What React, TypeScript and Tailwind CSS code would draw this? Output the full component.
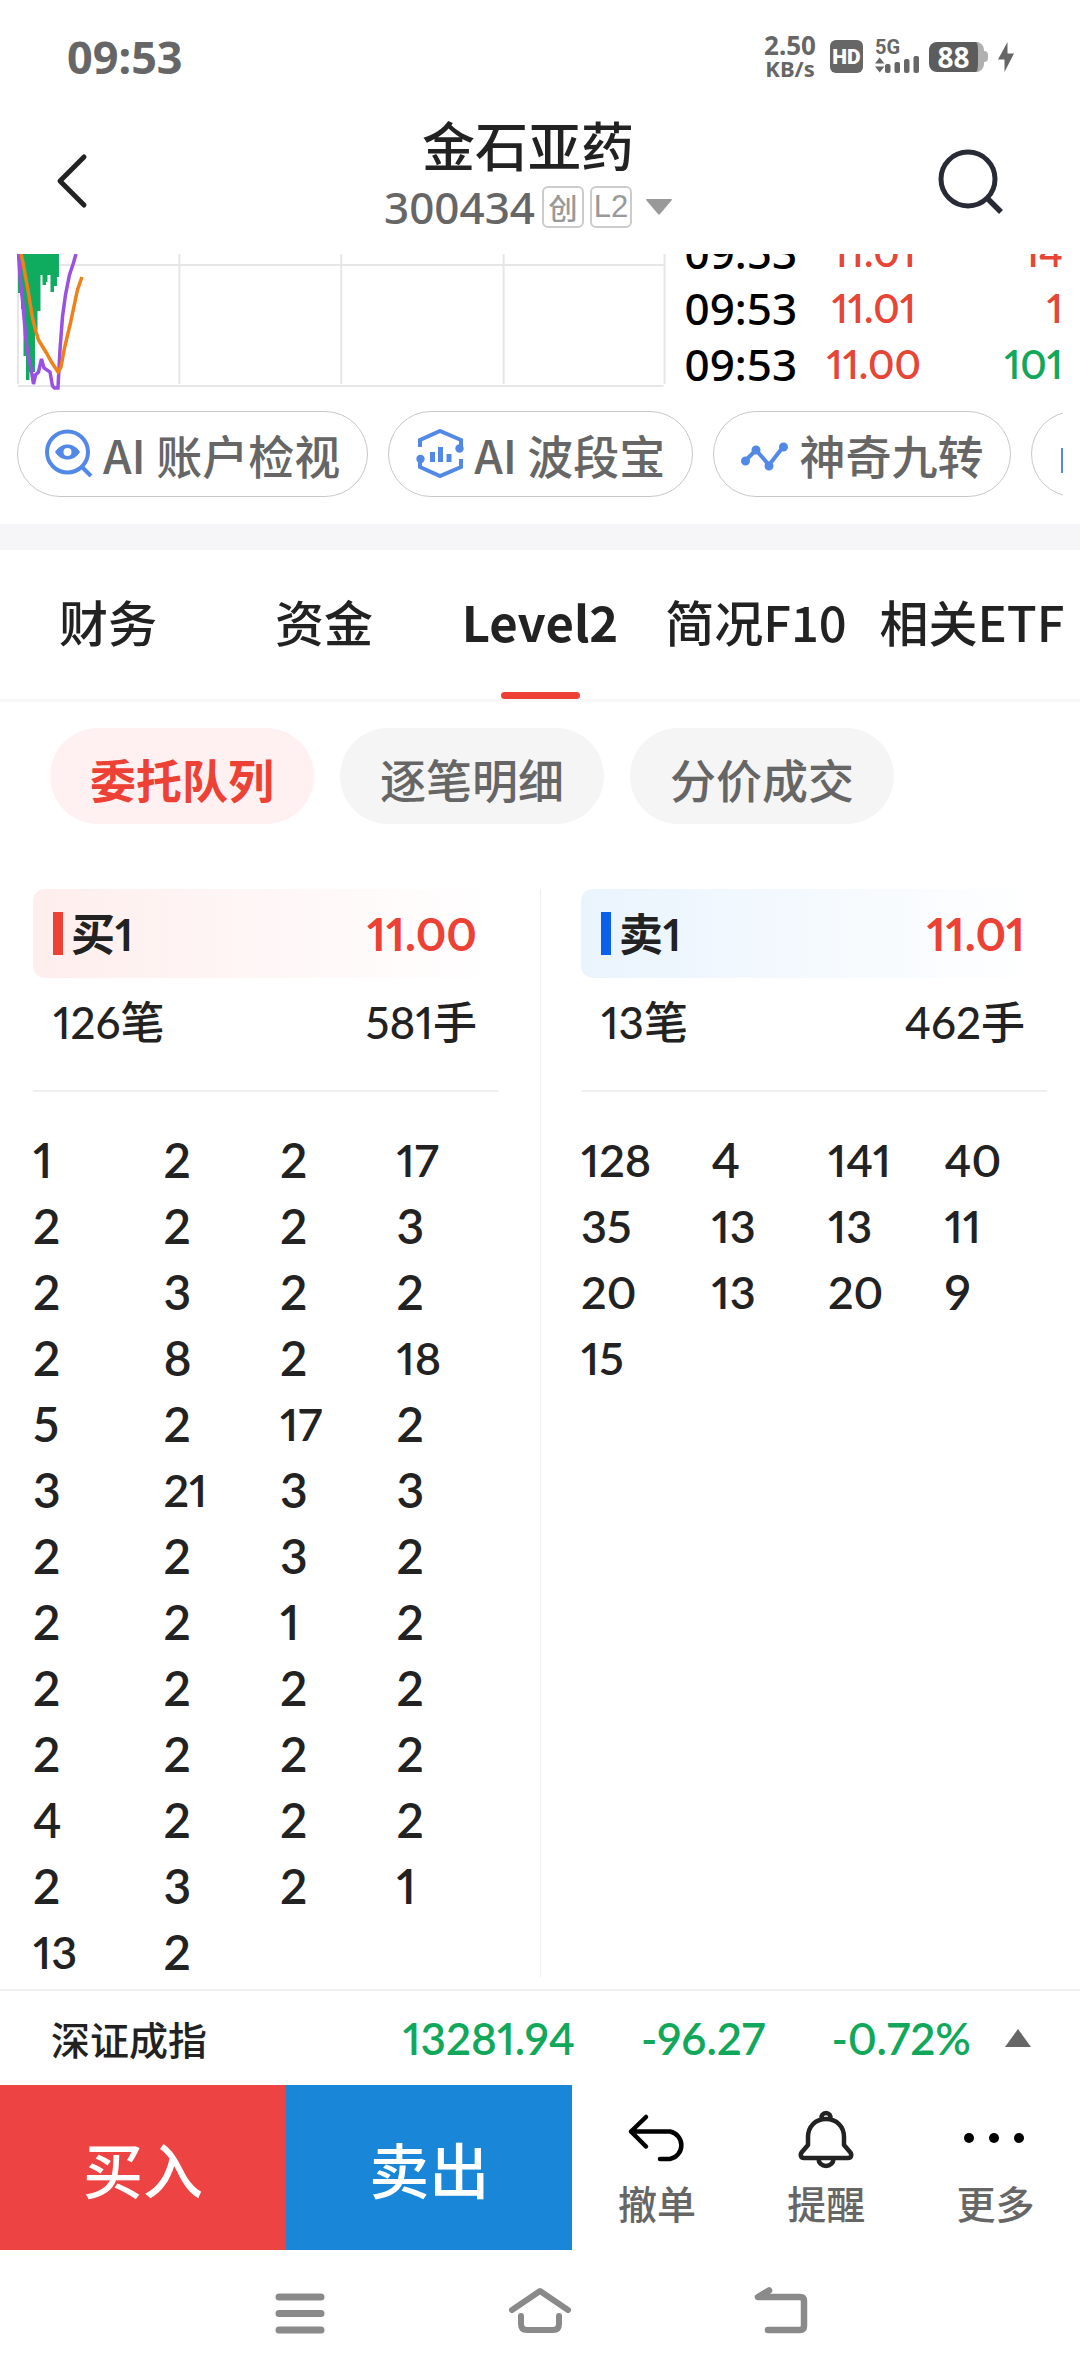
import React, { useState } from "react";

const TICKS = [
  { time: "09:53", price: "11.01", volume: "14", side: "buy" },
  { time: "09:53", price: "11.01", volume: "1", side: "buy" },
  { time: "09:53", price: "11.00", volume: "101", side: "sell" },
];

const TABS = ["财务", "资金", "Level2", "简况F10", "相关ETF"];
const SUB_TABS = ["委托队列", "逐笔明细", "分价成交"];

const BUY_QUEUE = [
  [1, 2, 2, 17],
  [2, 2, 2, 3],
  [2, 3, 2, 2],
  [2, 8, 2, 18],
  [5, 2, 17, 2],
  [3, 21, 3, 3],
  [2, 2, 3, 2],
  [2, 2, 1, 2],
  [2, 2, 2, 2],
  [2, 2, 2, 2],
  [4, 2, 2, 2],
  [2, 3, 2, 1],
  [13, 2],
];

const SELL_QUEUE = [
  [128, 4, 141, 40],
  [35, 13, 13, 11],
  [20, 13, 20, 9],
  [15],
];

const NUM = "font-['Lato','Noto_Sans_CJK_SC',sans-serif] proportional-nums";

const StatusBar = () => (
  <div className="flex h-[113px] items-center justify-between pr-[66px] pl-[67px] text-[#666]">
    <span className="font-['Noto_Sans',sans-serif] text-[45px] leading-[50px] font-bold">09:53</span>
    <div className="flex items-center">
      <div className="flex flex-col items-center font-['Noto_Sans',sans-serif] font-bold">
        <span className="text-[26px] leading-[23px]">2.50</span>
        <span className="text-[22px] leading-[23px]">KB/s</span>
      </div>
      <div className="ml-[14px] flex h-[33px] w-[33px] items-center justify-center rounded-md bg-[#666] font-['Roboto',sans-serif] text-[21px] leading-8 font-black text-white">
        HD
      </div>
      <div className="ml-3 flex w-[46px] flex-col">
        <span className="font-['Roboto',sans-serif] text-[20px] leading-[15px] font-bold">5G</span>
        <svg className="h-[18px] w-[46px]" viewBox="0 0 46 18" fill="currentColor">
          <path d="M0 8.5 4.7 2.5 9.4 8.5ZM0 11.5H9.4L4.7 17.5Z" />
          <rect x="10" y="9" width="5.5" height="9" rx="2" />
          <rect x="19.5" y="7" width="5.5" height="11" rx="2" />
          <rect x="29" y="4" width="5.5" height="14" rx="2" />
          <rect x="38.5" y="1" width="5.5" height="17" rx="2" />
        </svg>
      </div>
      <div className="ml-2 flex items-center">
        <div className="flex h-[30px] w-[55px] items-center justify-center rounded-lg border-r-[6px] border-[#b0b0b0] bg-[#5c5c5c] font-['Noto_Sans',sans-serif] text-[28px] leading-[30px] font-bold text-white">
          88
        </div>
        <div className="h-[11px] w-1 rounded-r-sm bg-[#b0b0b0]" />
      </div>
      <svg className="ml-[10px] h-[30px] w-4" viewBox="0 0 16 30" fill="currentColor">
        <path d="M9.5 0 0 17.5H6.5L6.5 30 16 11.5H9.5Z" />
      </svg>
    </div>
  </div>
);

const Header = () => (
  <header className="flex h-[141px] items-start justify-between pr-[76px] pl-[52px] text-[#222]">
    <button aria-label="返回" className="mt-10 w-[70px]">
      <svg className="h-[56px] w-[38px]" viewBox="0 0 38 56" fill="none" stroke="currentColor" strokeWidth="5" strokeLinecap="round" strokeLinejoin="round">
        <path d="M32 4 8 28 32 52" />
      </svg>
    </button>
    <div className="flex flex-col items-center">
      <h1 className="text-[53px] leading-[62px] font-medium">金石亚药</h1>
      <button className="flex items-center text-[#666]">
        <span className="font-['Noto_Sans',sans-serif] text-[44px] leading-[64px] font-medium">300434</span>
        <span className="ml-[7px] flex h-[42px] w-[42px] items-center justify-center rounded-md border-2 border-[#ccc] text-[29px] leading-[38px] font-medium text-[#999]">
          创
        </span>
        <span className="ml-[6px] flex h-[42px] w-[42px] items-center justify-center rounded-md border-2 border-[#ccc] font-['Liberation_Sans',sans-serif] text-[31px] leading-[38px] text-[#999]">
          L2
        </span>
        <svg className="ml-[14px] h-4 w-[26px]" viewBox="0 0 26 16" fill="#999">
          <path d="M1 0H25Q26.500 0 25.500 1.500L14 15Q13 16 12 15L.5 1.500Q-.5 0 1 0Z" />
        </svg>
      </button>
    </div>
    <button aria-label="搜索" className="mt-[36px] text-[#282b35]">
      <svg className="h-[66px] w-[70px]" viewBox="0 0 70 66" fill="none" stroke="currentColor" strokeWidth="5">
        <circle cx="34" cy="30" r="27" />
        <path d="M53 49 67 63" strokeWidth="5.500" />
      </svg>
    </button>
  </header>
);

const IndicatorChart = () => (
  <svg className="h-[138px] w-[62%]" viewBox="0 0 649 138" preserveAspectRatio="none" fill="none">
    <path d="M1 0V130M162.500 0V130M324.500 0V130M487 0V130M648 0V130M1 11H648M1 132H647" stroke="#e6e6e6" strokeWidth="2" />
    <path
      d="M1 0V39H4V55H6.500V102H9V126H12.500V118H18V76H20.500V57H23.500V21H25.500V31H29V28H30.500V21H33.500V38H37V32H40V23H42V0Z"
      fill="#0fab5f"
    />
    <path
      d="M1.500 0 3.500 29 5.500 46 9 86 12 106 14 114 16.500 130 18.500 121 21.500 118 24.500 105 27 114 33 118 35.500 132 37.500 134H41L43 96 45.500 63 48.500 41 52.500 21 56.500 9 59 0"
      stroke="#9a50e0"
      strokeWidth="3.500"
    />
    <path
      d="M4 0 5.500 6 11 36 15.500 64 18.500 76 21.500 86 29.500 99 34.500 108 41 118 44 113 47.500 94 53.500 69 60.500 36 65 23"
      stroke="#f08018"
      strokeWidth="3.500"
    />
  </svg>
);

const TickList = () => (
  <div className="flex h-[138px] flex-1 flex-col justify-end overflow-hidden pl-[19px]">
    <table className="w-full table-fixed">
      <tbody>
        {TICKS.map((tick, i) => (
          <tr key={i} className="h-14">
            <td className="w-[32%] p-0 font-['Noto_Sans',sans-serif] text-[44px] leading-[56px] font-medium text-black">{tick.time}</td>
            <td className={`${NUM} w-[36%] p-0 text-center text-[40px] leading-[56px] font-semibold text-[#e74536]`}>{tick.price}</td>
            <td
              className={`${NUM} p-0 text-right text-[40px] leading-[56px] font-semibold ${
                tick.side === "buy" ? "text-[#e74536]" : "text-[#12a85c]"
              }`}
            >
              {tick.volume}
            </td>
          </tr>
        ))}
      </tbody>
    </table>
  </div>
);

const EyeSearchIcon = () => (
  <svg className="h-[50px] w-[48px]" viewBox="0 0 48 50" fill="none" stroke="#5389e6" strokeWidth="4">
    <circle cx="22.500" cy="23" r="20.500" />
    <path d="M37 38 46 47" />
    <path d="M10 23C16 13 29 13 35 23 29 33 16 33 10 23Z" fill="#5389e6" stroke="none" />
    <circle cx="22.500" cy="23" r="4" fill="#fff" stroke="none" />
  </svg>
);

const HexBarsIcon = () => (
  <svg className="h-[50px] w-[48px]" viewBox="0 0 48 50" fill="none" stroke="#5389e6" strokeWidth="4">
    <path d="M4 18V11L24 2 45 11V18M4 30V38L24 47 45 38V30" />
    <circle cx="43.500" cy="19.500" r="4.200" fill="#5389e6" stroke="none" />
    <circle cx="4.500" cy="30" r="4.200" fill="#5389e6" stroke="none" />
    <path d="M16.500 33V23M24.500 33V18M33 33V25" strokeWidth="5" />
  </svg>
);

const ZigzagIcon = () => (
  <svg className="h-[50px] w-[48px]" viewBox="0 0 48 50" fill="#5389e6" stroke="#5389e6" strokeWidth="4">
    <path d="M4 32 15 21 28 36 42 18" fill="none" />
    <circle cx="4.500" cy="32" r="2.500" />
    <circle cx="15" cy="21" r="2.500" />
    <circle cx="28" cy="37" r="2.500" />
    <circle cx="42.500" cy="18" r="2.500" />
  </svg>
);

const BoxIcon = () => (
  <svg className="h-[50px] w-[48px]" viewBox="0 0 48 50" fill="none" stroke="#5389e6" strokeWidth="4">
    <rect x="4" y="21" width="38" height="21" />
  </svg>
);

const ToolPill = ({ icon, label }: { icon: React.ReactNode; label: string }) => (
  <button className="flex h-[86px] shrink-0 items-center gap-[10px] rounded-full border border-[#c8c8c8] px-[27px] text-[46px] leading-[60px] font-medium whitespace-nowrap text-[#666]">
    {icon}
    {label}
  </button>
);

const QueuePanel = ({
  title,
  price,
  orders,
  lots,
  rows,
  side,
}: {
  title: string;
  price: string;
  orders: string;
  lots: string;
  rows: number[][];
  side: "buy" | "sell";
}) => (
  <section className={side === "buy" ? "flex-1 border-r border-[#eee] pr-[41px] pl-[33px]" : "flex-1 pr-[33px] pl-10"}>
    <div
      className={`flex h-[89px] items-center rounded-xl bg-linear-to-r to-white pr-[22px] pl-5 ${
        side === "buy" ? "from-[#feeeed]" : "from-[#eaf4fd]"
      }`}
    >
      <span className={`h-[43px] w-[10px] ${side === "buy" ? "bg-[#ee4135]" : "bg-[#0a60ea]"}`} />
      <h2 className={`${NUM} ml-2 text-[44px] leading-[50px] font-bold`}>{title}</h2>
      <span className={`${NUM} ml-auto text-[46px] leading-[50px] font-bold text-[#ee4135]`}>{price}</span>
    </div>
    <div className={`${NUM} mt-[19px] flex justify-between border-b-2 border-[#f0f0f0] pr-[22px] pb-[43px] pl-5 text-[44px] leading-[50px] font-medium`}>
      <span>{orders}</span>
      <span>{lots}</span>
    </div>
    <table className="mt-[27px] w-full table-fixed">
      <colgroup>
        <col className="w-[28%]" />
        <col className="w-[25%]" />
        <col className="w-[25%]" />
        <col className="w-[22%]" />
      </colgroup>
      <tbody>
        {rows.map((row, i) => (
          <tr key={i}>
            {row.map((qty, j) => (
              <td key={j} className={`${NUM} px-0 pt-4 pb-0 leading-[50px] font-semibold ${qty < 10 ? "text-[48px]" : "text-[45px]"}`}>
                {qty}
              </td>
            ))}
          </tr>
        ))}
      </tbody>
    </table>
  </section>
);

const IndexBar = () => (
  <div className="flex h-[96px] items-center border-t-2 border-[#f0f0f0] pr-[49px] pl-[51px]">
    <span className="flex-1 text-[39px] leading-[50px] font-medium">深证成指</span>
    <div className={`${NUM} flex items-center text-[44px] leading-[50px] font-semibold text-[#12a85c]`}>
      <span>13281.94</span>
      <span className="ml-[66px]">-96.27</span>
      <span className="ml-[66px]">-0.72%</span>
    </div>
    <svg className="ml-[34px] h-[18px] w-[26px]" viewBox="0 0 26 18" fill="#666">
      <path d="M13 0 26 18H0Z" />
    </svg>
  </div>
);

const ActionButton = ({ label, children }: { label: string; children: React.ReactNode }) => (
  <button className="flex flex-1 flex-col items-center pt-[22px] text-[39px] leading-[50px] font-medium text-[#666]">
    <svg className="mb-2 h-[62px] w-[64px]" viewBox="0 0 64 62" fill="none" strokeLinecap="round" strokeLinejoin="round">
      {children}
    </svg>
    {label}
  </button>
);

const TradeBar = () => (
  <div className="flex h-[165px]">
    <button className="w-[26.5%] bg-[#ee4343] text-[60px] font-medium text-white">买入</button>
    <button className="w-[26.5%] bg-[#1a86d8] text-[60px] font-medium text-white">卖出</button>
    <ActionButton label="撤单">
      <path d="M21 10 6 24.500 21 39.500M6 24.500H45A14 14 0 0 1 45 52H35" stroke="#000" strokeWidth="4.500" />
    </ActionButton>
    <ActionButton label="提醒">
      <path
        d="M32 12C43 12 50 20 50 30V38L56 45C58.500 48 57 51 54 51H10C7 51 5.500 48 8 45L14 38V30C14 20 21 12 32 12ZM27.500 11.500A4.600 4.600 0 1 1 36.500 11.500M24.500 52A7.500 7 0 0 0 39.500 52"
        stroke="#222"
        strokeWidth="4.500"
      />
    </ActionButton>
    <ActionButton label="更多">
      <g fill="#000">
        <circle cx="6" cy="31" r="5" />
        <circle cx="31" cy="31" r="5" />
        <circle cx="56" cy="31" r="5" />
      </g>
    </ActionButton>
  </div>
);

const SystemNav = () => (
  <nav className="flex h-[126px] items-center justify-center gap-[176px] pb-1 text-[#8a8a8a]">
    <button aria-label="最近任务">
      <svg className="h-[50px] w-[64px]" viewBox="0 0 64 50" fill="none" stroke="currentColor" strokeWidth="7" strokeLinecap="round">
        <path d="M11 11H53M11 27.500H53M11 44H53" />
      </svg>
    </button>
    <button aria-label="主页">
      <svg className="h-[50px] w-[64px]" viewBox="0 0 64 50" fill="none" stroke="currentColor" strokeWidth="6" strokeLinecap="round" strokeLinejoin="round">
        <path d="M4 24 32 5 60 24M13 30V38Q13 44 19 44H45Q51 44 51 38V30" />
      </svg>
    </button>
    <button aria-label="后退">
      <svg className="h-[50px] w-[64px]" viewBox="0 0 64 50" fill="none" stroke="currentColor" strokeWidth="6.500" strokeLinecap="round" strokeLinejoin="round">
        <path d="M21 4.500 10 11H52Q56 11 56 15V40Q56 44 52 44H20" />
      </svg>
    </button>
  </nav>
);

export default function App() {
  const [tab, setTab] = useState("Level2");
  const [subTab, setSubTab] = useState("委托队列");

  return (
    <div className="min-h-screen bg-white font-['Noto_Sans_CJK_SC',sans-serif] text-[#222]">
      <StatusBar />
      <Header />

      <div className="flex px-[17px]">
        <IndicatorChart />
        <TickList />
      </div>

      {/* Tool shortcuts */}
      <div className="mx-[17px] mt-[19px] mb-[27px] flex gap-5 overflow-hidden">
        <ToolPill icon={<EyeSearchIcon />} label="AI 账户检视" />
        <ToolPill icon={<HexBarsIcon />} label="AI 波段宝" />
        <ToolPill icon={<ZigzagIcon />} label="神奇九转" />
        <ToolPill icon={<BoxIcon />} label="" />
      </div>

      <div className="h-[26px] bg-[#f6f6f9]" />

      {/* Main tabs */}
      <div className="flex h-[152px] border-b-[3px] border-[#f7f7f8]">
        {TABS.map((name) => (
          <button
            key={name}
            onClick={() => setTab(name)}
            className={`flex w-1/5 flex-col items-center justify-between pt-[41px] text-[49px] leading-[60px] whitespace-nowrap ${
              name === tab ? "font-bold" : "font-medium"
            }`}
          >
            {name}
            {name === tab && <span className="h-[7px] w-[79px] rounded-full bg-[#ee4135]" />}
          </button>
        ))}
      </div>

      {/* Level2 sub tabs */}
      <div className="flex gap-[26px] px-[50px] pt-[26px]">
        {SUB_TABS.map((name) => (
          <button
            key={name}
            onClick={() => setSubTab(name)}
            className={`h-24 w-[264px] rounded-full pt-1 text-[46px] leading-[60px] ${
              name === subTab ? "bg-[#fff1f1] font-bold text-[#ee4135]" : "bg-[#f5f5f5] font-medium text-[#666]"
            }`}
          >
            {name}
          </button>
        ))}
      </div>

      <div className="mt-[65px] flex pb-3">
        <QueuePanel side="buy" title="买1" price="11.00" orders="126笔" lots="581手" rows={BUY_QUEUE} />
        <QueuePanel side="sell" title="卖1" price="11.01" orders="13笔" lots="462手" rows={SELL_QUEUE} />
      </div>

      <IndexBar />
      <TradeBar />
      <SystemNav />
    </div>
  );
}
